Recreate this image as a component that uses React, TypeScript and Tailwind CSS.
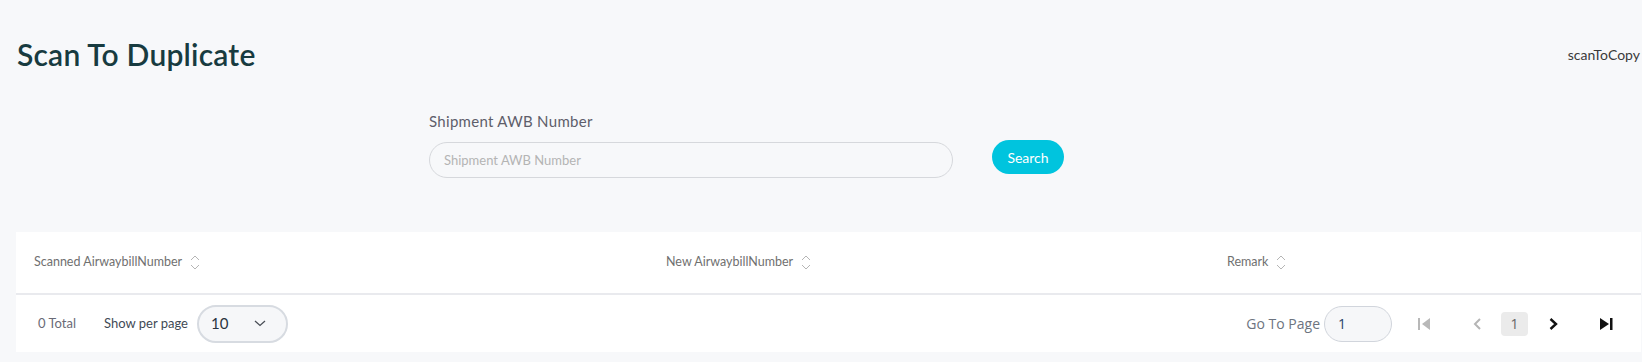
import React from "react";

function SortIcon() {
  return (
    <svg width="10" height="17" viewBox="0 0 10 17" fill="none" className="ml-2 shrink-0">
      <path d="M1 6 L5 2 L9 6" stroke="#b5b5b5" strokeWidth="1" />
      <path d="M1 11 L5 15 L9 11" stroke="#b5b5b5" strokeWidth="1" />
    </svg>
  );
}

function HeaderCell({ label, width }: { label: string; width: string }) {
  return (
    <div className={`flex items-center ${width}`}>
      <span className="text-[12.5px] text-[#707070]">{label}</span>
      <SortIcon />
    </div>
  );
}

export default function App() {
  const columns = [
    { label: "Scanned AirwaybillNumber", width: "w-[632px]" },
    { label: "New AirwaybillNumber", width: "w-[561px]" },
    { label: "Remark", width: "flex-1" },
  ];

  return (
    <div
      className="w-[1642px] h-[362px] overflow-hidden bg-[#f7f8fa] pl-4"
      style={{ fontFamily: "Lato, 'Open Sans', sans-serif" }}
    >
      {/* title row */}
      <div className="flex items-center justify-between h-[56px] mt-[26px]">
        <h1 className="text-[30px] font-semibold tracking-[0.2px] text-[#183b40] leading-none pl-px">
          Scan To Duplicate
        </h1>
        <span className="text-[14px] text-[#3a3a3a] pr-[2px]">scanToCopy</span>
      </div>

      {/* search form */}
      <div className="ml-[413px] mt-[32px] flex items-end gap-[39px]">
        <div className="flex flex-col">
          <label className="text-[15px] text-[#5e5e6a] tracking-[0.3px] leading-none mb-[13px]">
            Shipment AWB Number
          </label>
          <input
            className="w-[524px] h-[36px] rounded-full border border-[#d6d8dc] bg-[#f7f8fa] px-[14px] text-[13px] outline-none placeholder:text-[#b4b4b4]"
            placeholder="Shipment AWB Number"
          />
        </div>
        <button className="h-[34px] w-[72px] mb-[4px] rounded-full bg-[#00c4de] text-white text-[14px]">
          Search
        </button>
      </div>

      {/* table */}
      <div className="mt-[54px] w-[1625px] bg-white">
        <div className="flex items-center h-[63px] pl-[18px] border-b-2 border-[#e9eaee]">
          {columns.map((c) => (
            <HeaderCell key={c.label} label={c.label} width={c.width} />
          ))}
        </div>
        <div className="flex items-center h-[57px] pl-[22px] pr-[28px]">
          <span className="text-[13px] text-[#6a6a76]">0 Total</span>
          <span className="ml-[28px] text-[13px] text-[#3f4a55]">Show per page</span>
          <div className="ml-[9px] flex items-center w-[91px] h-[38px] rounded-full border-2 border-[#d7dbe1] bg-[#f6f7f9] pl-[12px] pr-[20px]">
            <span className="text-[15px] text-[#2a3440]">10</span>
            <svg className="ml-auto" width="12" height="7" viewBox="0 0 12 7" fill="none">
              <path d="M1 1 L6 5.5 L11 1" stroke="#4a4f57" strokeWidth="1.3" />
            </svg>
          </div>

          <div className="ml-auto flex items-center">
            <span
              className="text-[14px] text-[#6d7480]"
              style={{ fontFamily: "'Open Sans', sans-serif" }}
            >
              Go To Page
            </span>
            <div className="ml-[4px] flex items-center w-[68px] h-[36px] rounded-full border border-[#d1d5dc] bg-[#f6f7f9] pl-[13px]">
              <span className="text-[14px] text-[#27436a]" style={{ fontFamily: "'Open Sans', sans-serif" }}>
                1
              </span>
            </div>
            <svg className="ml-[26px]" width="12" height="12" viewBox="0 0 12 12">
              <rect x="0" y="0" width="2" height="12" fill="#b8b8b8" />
              <path d="M12 0 L12 12 L4 6 Z" fill="#b8b8b8" />
            </svg>
            <svg className="ml-[43px]" width="8" height="12" viewBox="0 0 8 12" fill="none">
              <path d="M7 1 L2 6 L7 11" stroke="#b5b5b5" strokeWidth="2" />
            </svg>
            <div
              className="ml-[20px] flex items-center justify-center w-[27px] h-[24px] rounded bg-[#ebebeb] text-[14px] text-[#666]"
              style={{ fontFamily: "'Open Sans', sans-serif" }}
            >
              1
            </div>
            <svg className="ml-[21px]" width="9" height="12" viewBox="0 0 9 12" fill="none">
              <path d="M1.5 1 L7 6 L1.5 11" stroke="#111" strokeWidth="2.4" />
            </svg>
            <svg className="ml-[42px]" width="13" height="12" viewBox="0 0 13 12">
              <path d="M0 0 L9 6 L0 12 Z" fill="#111" />
              <rect x="10" y="0" width="2.5" height="12" fill="#111" />
            </svg>
          </div>
        </div>
      </div>
    </div>
  );
}
